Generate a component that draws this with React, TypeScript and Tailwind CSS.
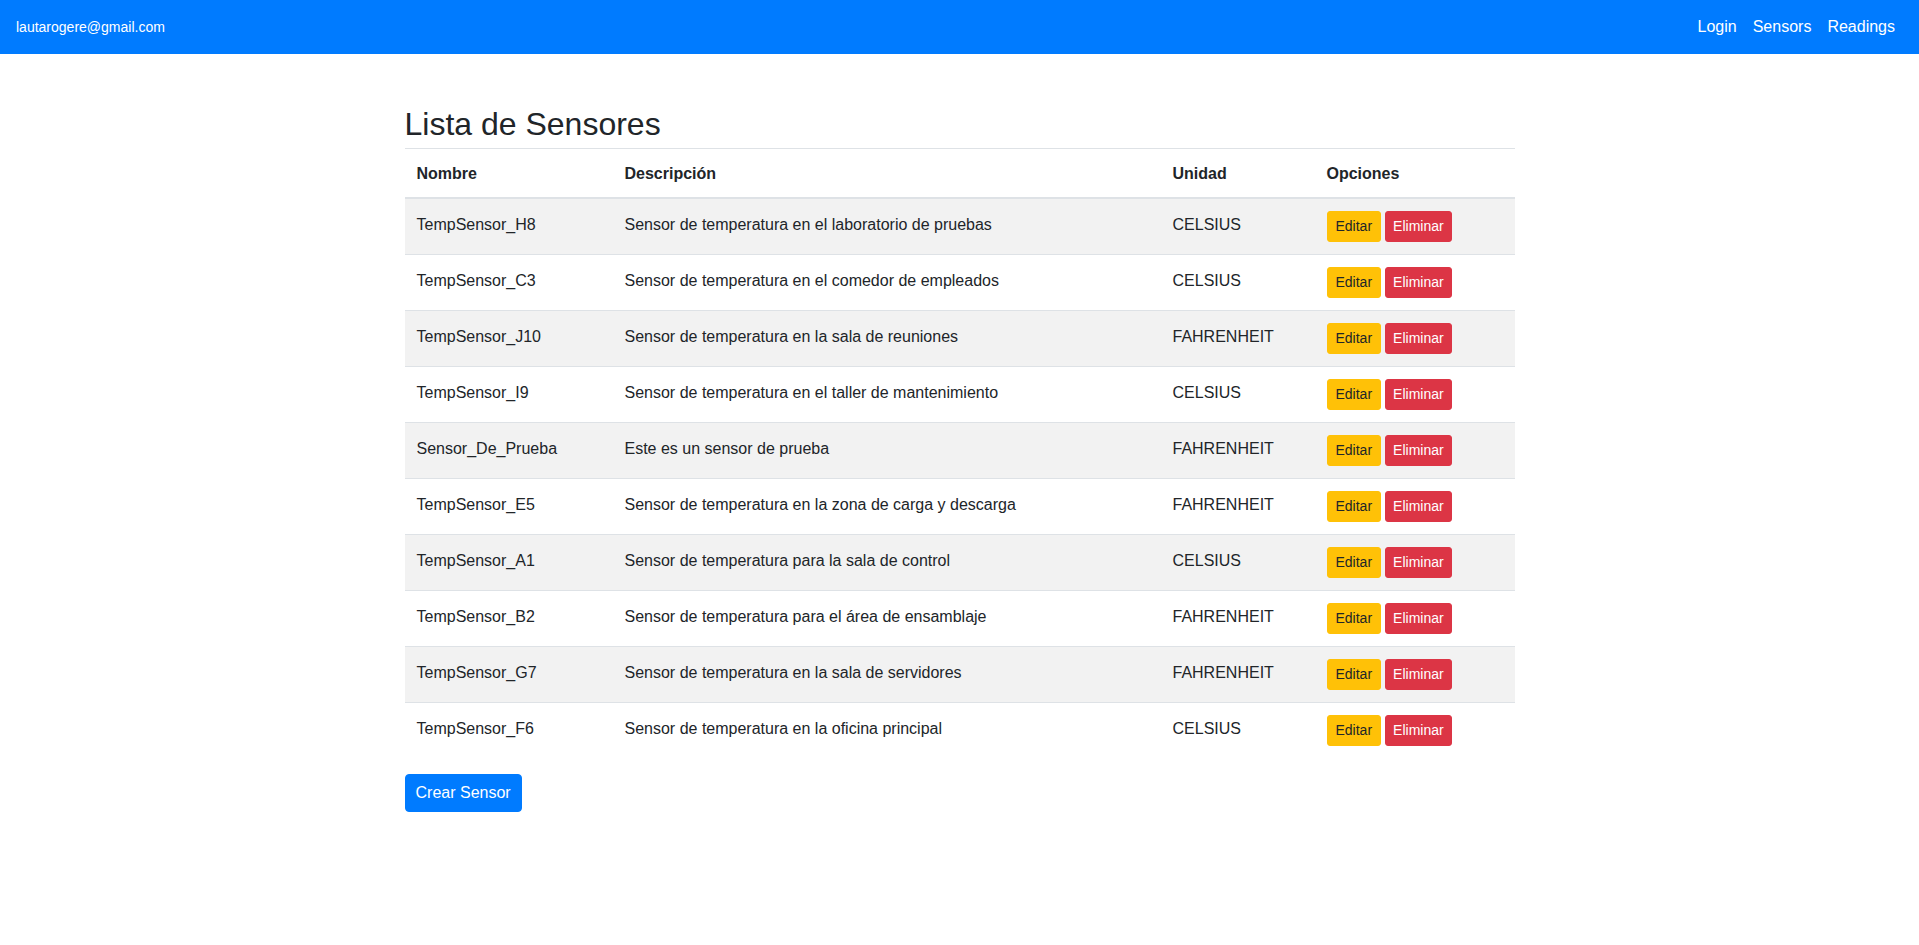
import React from "react";

const rows = [
  ["TempSensor_H8", "Sensor de temperatura en el laboratorio de pruebas", "CELSIUS"],
  ["TempSensor_C3", "Sensor de temperatura en el comedor de empleados", "CELSIUS"],
  ["TempSensor_J10", "Sensor de temperatura en la sala de reuniones", "FAHRENHEIT"],
  ["TempSensor_I9", "Sensor de temperatura en el taller de mantenimiento", "CELSIUS"],
  ["Sensor_De_Prueba", "Este es un sensor de prueba", "FAHRENHEIT"],
  ["TempSensor_E5", "Sensor de temperatura en la zona de carga y descarga", "FAHRENHEIT"],
  ["TempSensor_A1", "Sensor de temperatura para la sala de control", "CELSIUS"],
  ["TempSensor_B2", "Sensor de temperatura para el área de ensamblaje", "FAHRENHEIT"],
  ["TempSensor_G7", "Sensor de temperatura en la sala de servidores", "FAHRENHEIT"],
  ["TempSensor_F6", "Sensor de temperatura en la oficina principal", "CELSIUS"],
];

export default function App() {
  return (
    <div className="min-h-screen bg-white font-['Liberation_Sans',Arial,sans-serif] text-[#212529] text-[16px] leading-[1.5]">
      <nav className="h-[54px] bg-[#007bff] flex items-center justify-between pl-4 pr-4">
        <span className="text-[14px] text-white">lautarogere@gmail.com</span>
        <div className="flex text-white text-[16px]">
          <a className="px-2">Login</a>
          <a className="px-2">Sensors</a>
          <a className="px-2">Readings</a>
        </div>
      </nav>
      <div className="mx-auto w-[1110px] mt-12">
        <h2 className="text-[32px] font-medium leading-[1.2] pt-[3px] mb-[5px]">Lista de Sensores</h2>
        <table className="w-full table-fixed border-collapse mb-4">
          <colgroup>
            <col className="w-[208px]" />
            <col className="w-[548px]" />
            <col className="w-[154px]" />
            <col className="w-[200px]" />
          </colgroup>
          <thead>
            <tr>
              {["Nombre", "Descripción", "Unidad", "Opciones"].map((h) => (
                <th
                  key={h}
                  className="text-left font-bold px-3 pt-[13px] pb-[11px] align-bottom border-t border-t-[#dee2e6] border-b-2 border-b-[#dee2e6]"
                >
                  {h}
                </th>
              ))}
            </tr>
          </thead>
          <tbody>
            {rows.map((r, i) => (
              <tr key={r[0]} className={i % 2 === 0 ? "bg-[#f2f2f2]" : "bg-white"}>
                <td className="px-3 pt-[14px] pb-[10px] align-top border-t border-[#dee2e6]">{r[0]}</td>
                <td className="px-3 pt-[14px] pb-[10px] align-top border-t border-[#dee2e6]">{r[1]}</td>
                <td className="px-3 pt-[14px] pb-[10px] align-top border-t border-[#dee2e6]">{r[2]}</td>
                <td className="p-3 align-top border-t border-[#dee2e6]">
                  <div className="flex gap-1">
                    <button className="px-2 py-1 text-[14px] leading-[21px] rounded-[3px] border border-[#ffc107] bg-[#ffc107] text-[#212529]">
                      Editar
                    </button>
                    <button className="px-[7px] py-1 text-[14px] leading-[21px] rounded-[3px] border border-[#dc3545] bg-[#dc3545] text-white">
                      Eliminar
                    </button>
                  </div>
                </td>
              </tr>
            ))}
          </tbody>
        </table>
        <button className="px-[10px] py-[6px] text-[16px] leading-[24px] rounded-[4px] border border-[#007bff] bg-[#007bff] text-white">
          Crear Sensor
        </button>
      </div>
    </div>
  );
}
